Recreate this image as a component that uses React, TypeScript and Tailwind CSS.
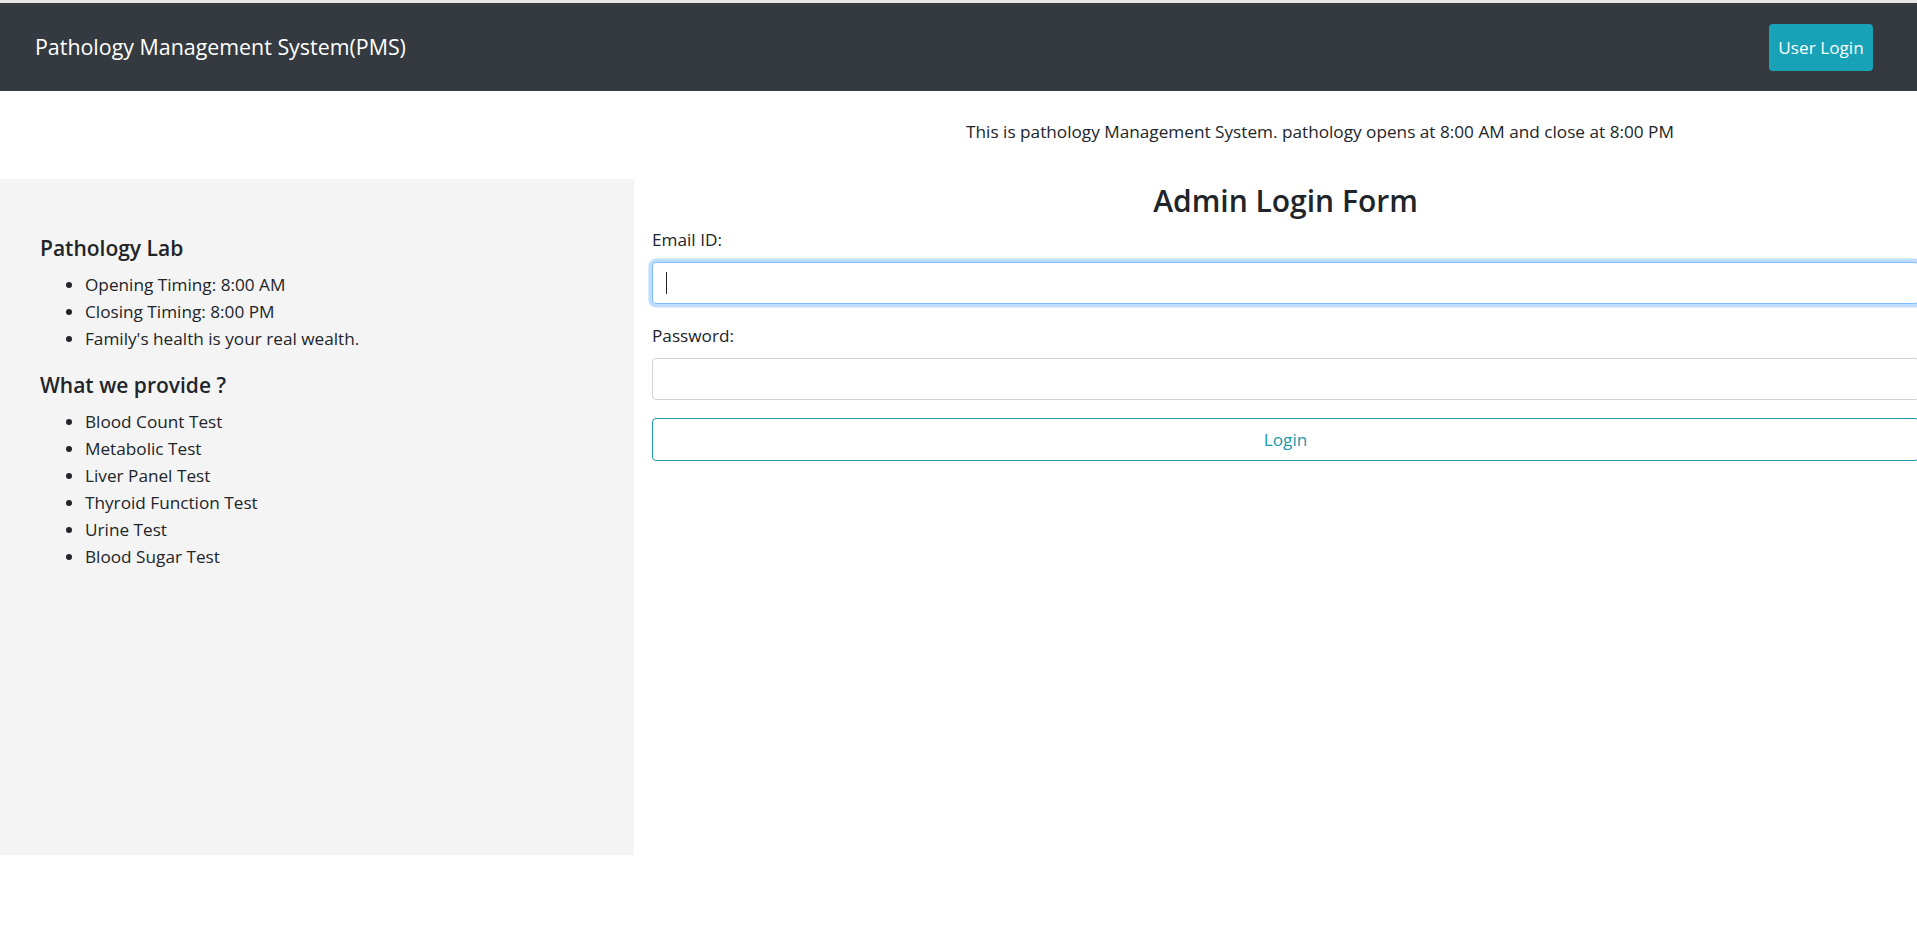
import { FC } from 'react';

const labItems = ['Opening Timing: 8:00 AM', 'Closing Timing: 8:00 PM', "Family's health is your real wealth."];

const tests = ['Blood Count Test', 'Metabolic Test', 'Liver Panel Test', 'Thyroid Function Test', 'Urine Test', 'Blood Sugar Test'];

const InfoList: FC<{ items: string[] }> = ({ items }) => (
  <ul className="list-disc pl-[45px] mb-[20px]">
    {items.map((item) => (
      <li key={item} className="leading-[27px]">
        {item}
      </li>
    ))}
  </ul>
);

const Sidebar: FC = () => (
  <div className="w-[634px] shrink-0 h-[676px] bg-[#f4f4f4] pl-[40px] pt-[56px]">
    <h5 className="text-[21px] leading-[27px] font-semibold mb-[9px]">Pathology Lab</h5>
    <InfoList items={labItems} />
    <h5 className="text-[21px] leading-[27px] font-semibold mb-[9px]">What we provide ?</h5>
    <InfoList items={tests} />
  </div>
);

const LoginForm: FC = () => (
  <div className="w-[1267px] shrink-0">
    <h2 className="text-[30px] leading-[43px] font-semibold text-center mb-[4px]">Admin Login Form</h2>
    <div className="mb-[18px]">
      <label className="block leading-[27px] mb-[9px]">Email ID:</label>
      <div className="relative">
        <input
          type="email"
          className="w-full h-[42px] px-[13px] rounded-[4px] border border-[#80bdff] outline-none shadow-[0_0_0_3.6px_rgba(0,123,255,0.25)] bg-white"
        />
        <span className="absolute left-[14px] top-[10px] w-px h-[22px] bg-[#212529]" />
      </div>
    </div>
    <div className="mb-[18px]">
      <label className="block leading-[27px] mb-[9px]">Password:</label>
      <input type="password" className="w-full h-[42px] px-[13px] rounded-[4px] border border-[#ced4da] outline-none bg-white" />
    </div>
    <button className="w-full h-[43px] rounded-[4px] border border-[#1c9aab] text-[#1c9aab] bg-white leading-[27px]">
      Login
    </button>
  </div>
);

export default function App() {
  return (
    <div
      className="w-full min-h-[930px] overflow-x-hidden bg-white text-[#212529] text-[17.2px] leading-[27px]"
      style={{ fontFamily: '"Segoe UI", "Open Sans", "Noto Sans", sans-serif' }}
    >
      <div className="h-[3px] bg-[#e6e6e6]" />
      <nav className="h-[88px] bg-[#343a40] flex items-center justify-between pl-[35px] pr-[44px]">
        <span className="text-white text-[21.4px] leading-[34px]">Pathology Management System(PMS)</span>
        <button className="w-[104px] h-[47px] rounded-[4px] bg-[#17a2b8] text-white text-[17.2px] text-center">
          User Login
        </button>
      </nav>
      <div className="h-[88px] pl-[723px] pt-[27px] flex justify-center">
        <p className="text-center leading-[27px]">
          This is pathology Management System. pathology opens at 8:00 AM and close at 8:00 PM
        </p>
      </div>
      <div className="flex">
        <Sidebar />
        <div className="pl-[18px]">
          <LoginForm />
        </div>
      </div>
    </div>
  );
}
